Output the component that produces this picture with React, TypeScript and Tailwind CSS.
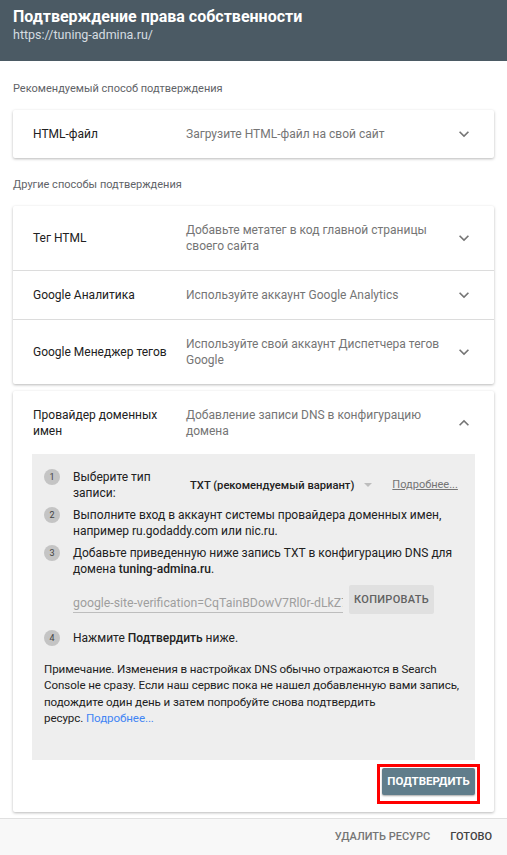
import React from "react";

const Chevron = ({ up = false }: { up?: boolean }) => (
  <div className="flex h-4 w-5 shrink-0 items-center justify-center">
    <svg width="20" height="20" viewBox="0 0 24 24" className="shrink-0 fill-[#757575]">
      {up ? (
        <path d="M12 8l-6 6 1.41 1.41L12 10.83l4.59 4.58L18 14z" />
      ) : (
        <path d="M16.59 8.59L12 13.17 7.41 8.59 6 10l6 6 6-6z" />
      )}
    </svg>
  </div>
);

const Row = ({ label, desc, up = false, border = false }: { label: string; desc: string; up?: boolean; border?: boolean }) => (
  <div className={`flex items-center pl-5 pr-[20px] py-4 text-[12px] leading-4 ${border ? "border-t border-[#dcdcdc]" : ""}`}>
    <div className="w-[153px] shrink-0 text-[#212121]">{label}</div>
    <div className="flex-1 pr-3 text-[#757575]">{desc}</div>
    <Chevron up={up} />
  </div>
);

const Step = ({ n, children }: { n: number; children: React.ReactNode }) => (
  <div className="flex items-start gap-[13px]">
    <div className="flex h-4 w-4 shrink-0 items-center justify-center rounded-full bg-[#c4c4c4] text-[9px] text-[#424242]">
      {n}
    </div>
    <div className="flex-1">{children}</div>
  </div>
);

export default function App() {
  return (
    <div className="flex h-[855px] w-[507px] flex-col bg-white font-['Roboto',sans-serif]">
      {/* Header */}
      <div className="h-[61px] shrink-0 bg-[#4b5a64] px-[13px] pt-[7px]">
        <div className="text-[16px] font-bold leading-[20px] text-white">Подтверждение права собственности</div>
        <div className="text-[12.5px] leading-4 text-[#d6dde1]">https://tuning-admina.ru/</div>
      </div>

      {/* Body */}
      <div className="flex-1 overflow-hidden px-[13px]">
        <div className="pt-[20px] text-[11px] leading-4 text-[#5f6368]">Рекомендуемый способ подтверждения</div>
        <div className="mt-[13px] rounded-[2px] bg-white shadow-[0_1px_3px_rgba(0,0,0,0.28)]">
          <Row label="HTML-файл" desc="Загрузите HTML-файл на свой сайт" />
        </div>

        <div className="pt-[19px] text-[11px] leading-4 text-[#5f6368]">Другие способы подтверждения</div>
        <div className="mt-[13px] rounded-[2px] bg-white shadow-[0_1px_3px_rgba(0,0,0,0.28)]">
          <Row label="Тег HTML" desc="Добавьте метатег в код главной страницы своего сайта" />
          <Row border label="Google Аналитика" desc="Используйте аккаунт Google Analytics" />
          <Row border label="Google Менеджер тегов" desc="Используйте свой аккаунт Диспетчера тегов Google" />
        </div>

        <div className="mt-[7px] rounded-[2px] bg-white pb-2 shadow-[0_1px_3px_rgba(0,0,0,0.28)]">
          <div className="-mb-[1px]">
            <Row up label="Провайдер доменных имен" desc="Добавление записи DNS в конфигурацию домена" />
          </div>

          <div className="mx-[19px] bg-[#eeeeee] px-3 pb-[34px] pt-[15px] text-[12px] leading-4 text-[#212121]">
            <div className="flex flex-col gap-[6px]">
              <Step n={1}>
                <div className="flex items-center whitespace-nowrap">
                  <div className="w-[117px] shrink-0 whitespace-normal">Выберите тип записи:</div>
                  <div className="mt-[1px] text-[11.2px] font-medium text-[#212121]">ТХТ (рекомендуемый вариант)</div>
                  <div className="ml-[10px] h-0 w-0 border-x-[4px] border-t-[4px] border-x-transparent border-t-[#bdbdbd]" />
                  <div className="ml-[20px] text-[11px] text-[#757575] underline">Подробнее...</div>
                </div>
              </Step>
              <Step n={2}>Выполните вход в аккаунт системы провайдера доменных имен, например ru.godaddy.com или nic.ru.</Step>
              <Step n={3}>
                <div>
                  Добавьте приведенную ниже запись TXT в конфигурацию DNS для домена <span className="font-medium">tuning-admina.ru</span>.
                </div>
                <div className="mt-2 flex items-start gap-[6px]">
                  <div className="mt-[10px] w-[270px] overflow-hidden whitespace-nowrap border-b border-[#bdbdbd] pb-[1px] text-[12.3px] leading-4 text-[#9e9e9e]">
                    google-site-verification=CqTainBDowV7Rl0r-dLkZ7lJx0w
                  </div>
                  <div className="flex h-[29px] w-[85px] items-center justify-center rounded-[2px] bg-[#e0e0e0] text-[11px] font-medium tracking-[0.3px] text-[#616161]">
                    КОПИРОВАТЬ
                  </div>
                </div>
              </Step>
              <div className="mt-[10px]">
                <Step n={4}>
                  Нажмите <span className="font-medium">Подтвердить</span> ниже.
                </Step>
              </div>
            </div>
            <p className="mt-[15px] text-[11.6px] leading-[16.3px] tracking-[-0.1px]">
              Примечание. Изменения в настройках DNS обычно отражаются в Search Console не сразу. Если наш сервис пока не нашел добавленную вами запись, подождите один день и затем попробуйте снова подтвердить
              <br />
              ресурс. <span className="text-[#4285f4]">Подробнее...</span>
            </p>
          </div>

          <div className="mt-[4px] flex justify-end pr-[14px]">
            <div className="border-[3px] border-[#ff0000] px-[2px] pb-[6px] pt-[1px]">
              <div className="flex h-[27px] w-[93px] items-center justify-center rounded-[2px] bg-[#607d8b] text-[11.5px] font-bold text-white shadow-[0_1px_2px_rgba(0,0,0,0.35)]">
                ПОДТВЕРДИТЬ
              </div>
            </div>
          </div>
        </div>
      </div>

      {/* Footer */}
      <div className="flex h-[37px] shrink-0 items-center justify-end gap-5 border-t border-[#e0e0e0] bg-[#f8f8f8] pr-[15px] text-[11px] font-medium">
        <span className="text-[#757575]">УДАЛИТЬ РЕСУРС</span>
        <span className="text-[#424242]">ГОТОВО</span>
      </div>
    </div>
  );
}
